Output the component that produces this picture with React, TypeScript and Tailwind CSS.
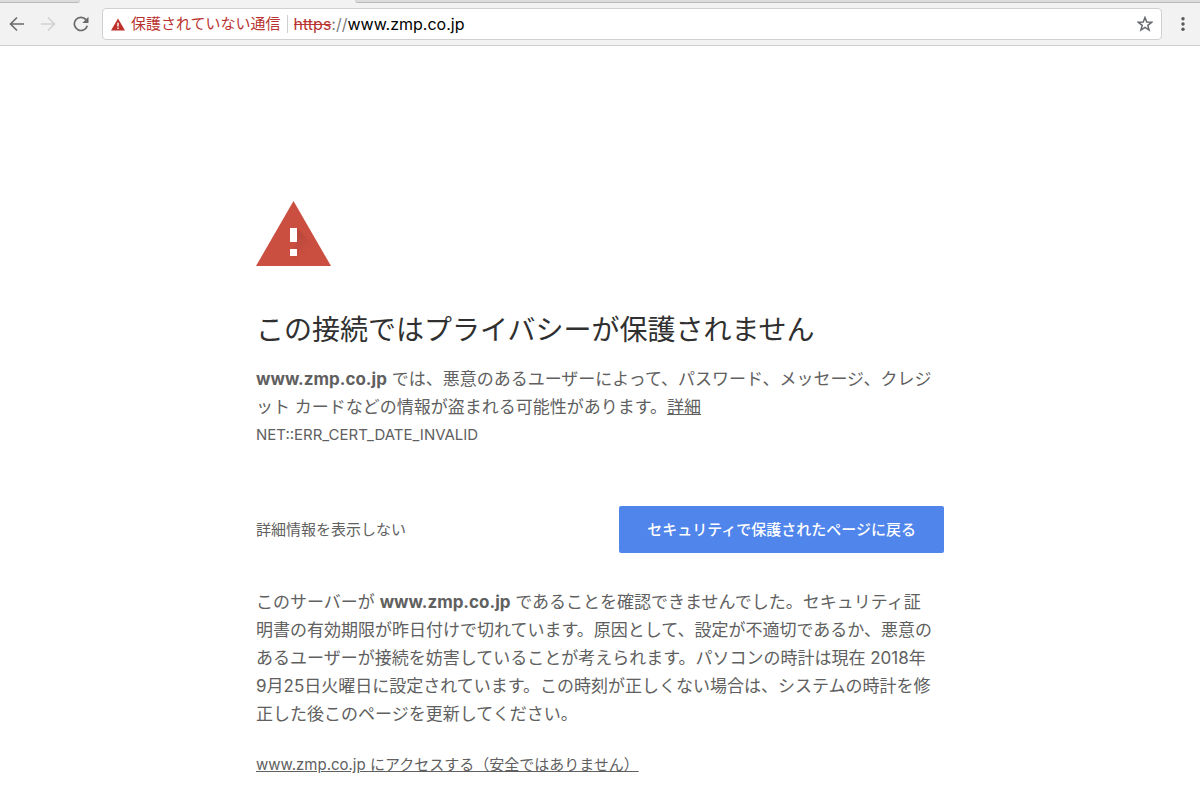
function TabStrip() {
  return (
    <div className="flex h-1 bg-[#f2f2f2]" aria-hidden="true">
      <div className="h-[3px] w-20 rounded-br border-b border-[#b9b9b9] bg-[#dcdcdc]" />
      <div className="w-[275px]" />
      <div className="h-[3px] flex-1 rounded-bl border-b border-[#b9b9b9] bg-[#dcdcdc]" />
    </div>
  );
}

function Toolbar() {
  return (
    <div className="flex h-[42px] items-center border-b border-[#cfcfcf] bg-[#f2f2f2] pb-px">
      <div className="flex w-[102px] items-center gap-4 pl-[9px]">
        <button type="button" aria-label="戻る" className="size-4">
          <svg viewBox="0 0 16 16" className="size-4" fill="none" stroke="#6a6a6a" strokeWidth="1.6">
            <path d="M15 8H1.500M8 1.500 1.500 8l6.500 6.500" />
          </svg>
        </button>
        <button type="button" aria-label="進む" className="size-4" disabled>
          <svg viewBox="0 0 16 16" className="size-4" fill="none" stroke="#d2d2d2" strokeWidth="1.6">
            <path d="M0 8H13.500M7 1.500 13.500 8 7 14.500" />
          </svg>
        </button>
        <button type="button" aria-label="再読み込み" className="size-4">
          <svg viewBox="0 0 16 16" className="size-4">
            <path d="M13 3.600A6.600 6.600 0 1 0 14.300 9.800" fill="none" stroke="#6a6a6a" strokeWidth="1.700" />
            <path d="M15.500 .8v6.200H9.300z" fill="#6a6a6a" />
          </svg>
        </button>
      </div>
      <div className="flex h-8 flex-1 items-center rounded-[4px] border border-[#d0d0d0] bg-white pr-2 pl-2">
        <svg viewBox="0 0 14 13" className="mr-1.5 h-[13px] w-3.5 shrink-0" aria-hidden="true">
          <path d="M7 .5 14 12.500H0z" fill="#c0302b" />
          <path d="M6.300 4.800h1.400v3.700H6.300zM6.300 9.600h1.400V11H6.300z" fill="#fff" />
        </svg>
        <span className="shrink-0 text-[15px] leading-5 text-[#b93430]">保護されていない通信</span>
        <span className="mx-1.5 h-[18px] w-px bg-[#cfcfcf]" />
        <div className="min-w-0 flex-1 truncate text-base leading-5 text-black">
          <span className="text-[#b93430] line-through">https</span>
          <span className="text-[#808080]">://</span>
          <span>www.zmp.co.jp</span>
        </div>
        <button type="button" aria-label="このページをブックマークに追加します" className="size-4">
          <svg viewBox="0 0 16 16" className="size-4" fill="none" stroke="#66696d" strokeWidth="1.500">
            <path d="m8 1.500 1.750 4.550 4.850.25-3.800 3.050 1.300 4.700L8 11.400l-4.100 2.650 1.300-4.700L1.400 6.300l4.850-.25z" />
          </svg>
        </button>
      </div>
      <button type="button" aria-label="メニュー" className="flex w-[38px] justify-center pl-1">
        <svg viewBox="0 0 4 16" className="h-4 w-1" fill="#5a5a5a">
          <circle cx="2" cy="2.700" r="1.700" />
          <circle cx="2" cy="8" r="1.700" />
          <circle cx="2" cy="13.300" r="1.700" />
        </svg>
      </button>
    </div>
  );
}

function WarningIcon() {
  return (
    <svg viewBox="0 0 76 65" className="h-[65px] w-[76px]" role="img" aria-label="警告">
      <defs>
        <linearGradient id="shade" gradientUnits="userSpaceOnUse" x1="38" y1="38" x2="51" y2="51">
          <stop offset="0" stopColor="#b5453a" stopOpacity="0.75" />
          <stop offset="1" stopColor="#b5453a" stopOpacity="0" />
        </linearGradient>
      </defs>
      <path d="M37.500 0 75 65H0z" fill="#ca4f40" />
      <path d="M41 27 66 52v13H44L34 55l7-14z" fill="url(#shade)" />
      <path d="M34 27h7v14h-7zM34 48h7v7h-7z" fill="#fff" />
    </svg>
  );
}

export default function App() {
  return (
    <div className="min-h-screen bg-white font-[Inter,'Noto_Sans_CJK_JP',sans-serif]" lang="ja">
      <header>
        <TabStrip />
        <Toolbar />
      </header>
      <main className="mx-auto max-w-[688px] pt-[155px] pb-8 text-[17px] leading-7 text-[#606060]">
        <WarningIcon />
        <h1 className="mt-[46px] text-[28px] leading-9 text-[#303030]">この接続ではプライバシーが保護されません</h1>
        <p className="mt-[17px]">
          <strong className="font-bold">www.zmp.co.jp</strong>{" "}
          では、悪意のあるユーザーによって、パスワード、メッセージ、クレジ
          <br />
          ット カードなどの情報が盗まれる可能性があります。
          <a href="#details" className="underline">詳細</a>
        </p>
        <p className="text-[15px] leading-7">NET::ERR_CERT_DATE_INVALID</p>
        <div className="mt-[57px] flex items-center justify-between text-[15px]">
          <button type="button">詳細情報を表示しない</button>
          <button type="button" className="h-[47px] rounded-[2px] bg-[#5085ec] px-7 font-medium text-white">
            セキュリティで保護されたページに戻る
          </button>
        </div>
        <p className="mt-[35px]">
          このサーバーが <strong className="font-bold">www.zmp.co.jp</strong>{" "}
          であることを確認できませんでした。セキュリティ証
          <br />
          明書の有効期限が昨日付けで切れています。原因として、設定が不適切であるか、悪意の
          <br />
          あるユーザーが接続を妨害していることが考えられます。パソコンの時計は現在 2018年
          <br />
          9月25日火曜日に設定されています。この時刻が正しくない場合は、システムの時計を修
          <br />
          正した後このページを更新してください。
        </p>
        <p className="mt-[23px] text-[15px]">
          <a href="#proceed" className="underline">www.zmp.co.jp にアクセスする（安全ではありません）</a>
        </p>
      </main>
    </div>
  );
}
